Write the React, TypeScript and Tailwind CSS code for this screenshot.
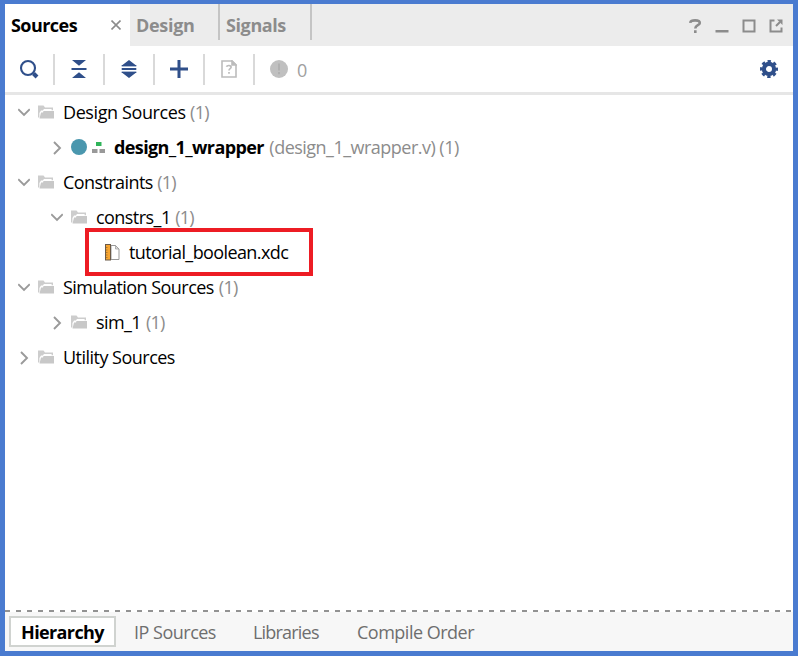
import type { ReactNode } from "react";

function Chevron({ open }: { open: boolean }) {
  return (
    <svg width="12" height="14" viewBox="0 0 12 14" fill="none" stroke="#9a9a9a" strokeWidth="1.9" className="shrink-0">
      <path d={open ? "M0.2 3.2L6 9L11.8 3.2" : "M3 1L9 7L3 13"} />
    </svg>
  );
}

function Folder() {
  return (
    <svg width="16" height="14" viewBox="0 0 16 14" className="mb-px ml-2 shrink-0">
      <path d="M0 0.5H5.5L7 2.5H15V5.2H13.6V4H6L4.8 5.5H3L1.4 8V12.5H0Z" fill="#cdcdcd" />
      <path d="M5.5 6H16V13.5H1.5L3 7.5H5Z" fill="#c8c8c8" />
    </svg>
  );
}

function FileIcon() {
  return (
    <svg width="15" height="17" viewBox="0 0 15 17" className="shrink-0">
      <path d="M6 1.5H10.5L14 5V15.5H6Z" fill="#fff" stroke="#999" />
      <path d="M10.5 1.5V5H14Z" fill="#ddd" stroke="#999" strokeWidth="0.7" />
      <rect x="0.5" y="0.5" width="5" height="15.5" fill="#f7a531" stroke="#6b5a48" />
      <path d="M1 3.5H2.5M1 6H2.5M1 8.5H2.5M1 11H2.5M1 13.5H2.5" stroke="#9a6d2c" strokeWidth="0.8" />
    </svg>
  );
}

function Row({ level, open, label, count, tracking, gap = "ml-[5px]" }: { level: 0 | 1; open: boolean; label: string; count?: string; tracking: string; gap?: string }) {
  return (
    <div className={`flex h-[35px] items-center ${level ? "pl-[46px]" : "pl-[13px]"}`}>
      <Chevron open={open} />
      <Folder />
      <span className={`ml-[9px] ${tracking}`}>{label}</span>
      {count && <span className={`${gap} tracking-[-0.75px] text-[#8c8c8c]`}>{count}</span>}
    </div>
  );
}

function Tool({ children }: { children: ReactNode }) {
  return (
    <div className="flex h-full w-[50px] items-center">
      <div className="flex w-12 justify-center">{children}</div>
      <div className="h-[31px] w-[2px] bg-[#d9d9d9]" />
    </div>
  );
}

export default function App() {
  return (
    <div className="h-[657px] w-[802px] bg-white">
      <div className="flex h-[656px] w-[798px] flex-col overflow-hidden border-x-5 border-t-4 border-b-5 border-[#4a7bd0] bg-white font-['Open_Sans','Noto_Sans',sans-serif] text-[18px] leading-[35px] whitespace-nowrap text-black">
        <header className="flex h-[42px] shrink-0 bg-[#ececec] font-bold text-[#8c8c8c]">
          <div className="flex w-[125px] items-center justify-between bg-white pr-[9px] pl-[6px] text-black">
            <span className="tracking-[-0.55px]">Sources</span>
            <svg width="10" height="10" viewBox="0 0 10 10" stroke="#8c8c8c" strokeWidth="1.6">
              <path d="M0.5 0.5L9.5 9.5M9.5 0.5L0.5 9.5" />
            </svg>
          </div>
          <div className="flex h-9 w-[90px] border-r-2 border-[#c4c4c4] pl-[6px] leading-[42px]">
            <span className="tracking-[-0.3px]">Design</span>
          </div>
          <div className="flex h-9 w-[92px] border-r-2 border-[#c4c4c4] pl-[6px] leading-[42px]">
            <span className="tracking-[-0.4px]">Signals</span>
          </div>
          <div className="ml-auto flex items-center gap-[13px] pt-[2px] pr-[10px]">
            <svg width="13" height="14" viewBox="0 0 13 14" fill="none" stroke="#8c8c8c" strokeWidth="2.6">
              <path d="M1.2 3.8C1.6 .6 10.8 .4 10.8 4C10.8 6.5 6.3 6 6.3 9.5M6.3 11.2V14" />
            </svg>
            <svg width="14" height="14" viewBox="0 0 14 14">
              <path d="M0.5 11H13.5V13.5H0.5Z" fill="#8c8c8c" />
            </svg>
            <svg width="14" height="14" viewBox="0 0 14 14" fill="none" stroke="#8c8c8c" strokeWidth="2">
              <path d="M1.5 1.5H12.5V12.5H1.5Z" />
            </svg>
            <svg width="14" height="14" viewBox="0 0 14 14" fill="none" stroke="#8c8c8c" strokeWidth="2">
              <path d="M5.5 1.5H1.5V12.5H12.5V8.5M7 7L11 3" />
              <path d="M8 0.5H13.5V6Z" fill="#8c8c8c" stroke="none" />
            </svg>
          </div>
        </header>

        <div className="flex h-[49px] shrink-0 items-center border-b-3 border-[#e6e6e6]">
          <Tool>
            <svg width="20" height="20" viewBox="0 0 20 20" fill="none" stroke="#2f4f8a">
              <circle cx="9" cy="9" r="7" strokeWidth="2.1" />
              <path d="M14.5 14.5L18 18" strokeWidth="4" />
            </svg>
          </Tool>
          <Tool>
            <svg width="16" height="20" viewBox="0 0 16 20" fill="#2f4f8a">
              <path d="M1 1H15L8 6.8ZM0.5 9H15.5V11H0.5ZM1 19H15L8 13.2Z" />
            </svg>
          </Tool>
          <Tool>
            <svg width="16" height="20" viewBox="0 0 16 20" fill="#2f4f8a">
              <path d="M1.5 6H14.5L8 1ZM1.5 14H14.5L8 19Z" />
              <path d="M0.7 7.2H15.3M0.7 12.8H15.3" stroke="#6f88b3" strokeWidth="0.8" />
              <path d="M0.7 9H15.3V11H0.7Z" />
              <path d="M0.7 6H15.3V7H0.7ZM0.7 13H15.3V14H0.7Z" />
            </svg>
          </Tool>
          <Tool>
            <svg width="18" height="18" viewBox="0 0 18 18" fill="none" stroke="#2f4f8a" strokeWidth="3">
              <path d="M0 9H18M9 0V18" />
            </svg>
          </Tool>
          <Tool>
            <svg width="16" height="18" viewBox="0 0 16 18" fill="none" stroke="#bcbcbc" strokeWidth="1.6">
              <path d="M1 1H11L15 5V17H1Z" />
              <path d="M11 1V5H15Z" fill="#bcbcbc" />
              <path d="M5.5 6.8C6 5 10.2 5 10.1 7.2C10 8.8 8 8.6 8 10.6M8 12V13.8" strokeWidth="1.7" />
            </svg>
          </Tool>
          <svg width="18" height="18" viewBox="0 0 18 18" className="ml-[15px]">
            <circle cx="9" cy="9" r="9" fill="#c0c0c0" />
            <path d="M9 3.5V10.5M9 12V14.2" stroke="#b0b0b0" strokeWidth="2" />
          </svg>
          <span className="ml-[9px] pt-[2px] text-[#a0a0a0]">0</span>
          <svg width="18" height="18" viewBox="0 0 18 18" className="mr-[15px] ml-auto" fill="none" stroke="#2f4f8a">
            <circle cx="9" cy="9" r="5.1" strokeWidth="4.2" />
            <circle cx="9" cy="9" r="7.8" strokeWidth="2.4" strokeDasharray="3.4 2.726" strokeDashoffset="1.7" />
          </svg>
        </div>

        <main className="min-h-0 flex-1">
          <Row level={0} open label="Design Sources" count="(1)" tracking="tracking-[-0.4px]" gap="ml-[4.5px]" />
          <div className="flex h-[35px] items-center pl-[46px]">
            <Chevron open={false} />
            <svg width="34" height="16" viewBox="0 0 34 16" className="mb-[2px] ml-2">
              <circle cx="8" cy="8" r="8" fill="#4a97ae" />
              <path d="M25 3H30.5V7H25Z" fill="#30b45a" />
              <path d="M21 10H26.5V14H21ZM28.5 10H34V14H28.5Z" fill="#999" />
            </svg>
            <span className="ml-[9px] font-bold tracking-[-0.61px]">design_1_wrapper</span>
            <span className="ml-[5.5px] tracking-[-0.52px] text-[#8c8c8c]">(design_1_wrapper.v) (1)</span>
          </div>
          <Row level={0} open label="Constraints" count="(1)" tracking="tracking-[-0.58px]" gap="ml-[4.5px]" />
          <Row level={1} open label="constrs_1" count="(1)" tracking="tracking-[-0.55px]" gap="ml-[4.5px]" />
          <div className="relative flex h-[35px] items-center pl-[100px]">
            <FileIcon />
            <span className="ml-[9px] tracking-[-0.6px]">tutorial_boolean.xdc</span>
            <div className="absolute top-[-7px] left-20 h-12 w-57 border-4 border-[#ed1c24]" />
          </div>
          <Row level={0} open label="Simulation Sources" count="(1)" tracking="tracking-[-0.54px]" />
          <Row level={1} open={false} label="sim_1" count="(1)" tracking="tracking-[-0.6px]" />
          <Row level={0} open={false} label="Utility Sources" tracking="tracking-[-0.52px]" />
        </main>

        <div className="h-[2px] shrink-0 bg-[repeating-linear-gradient(90deg,#929292_0px,#929292_5px,#fff_5px,#fff_11px)]" />
        <footer className="flex h-[39px] shrink-0 items-center bg-[#f7f7f7] text-[#6e6e6e]">
          <div className="ml-[4px] flex h-[31px] w-[107px] items-center border-2 border-[#d0d3d0] bg-white pt-[2px] pl-[10px] font-bold text-black">
            <span className="tracking-[-0.62px]">Hierarchy</span>
          </div>
          <span className="ml-[18px] w-[119px] pt-[2px] tracking-[-0.5px]">IP Sources</span>
          <span className="w-[104px] pt-[2px] tracking-[-0.8px]">Libraries</span>
          <span className="pt-[2px] tracking-[-0.5px]">Compile Order</span>
        </footer>
      </div>
    </div>
  );
}
